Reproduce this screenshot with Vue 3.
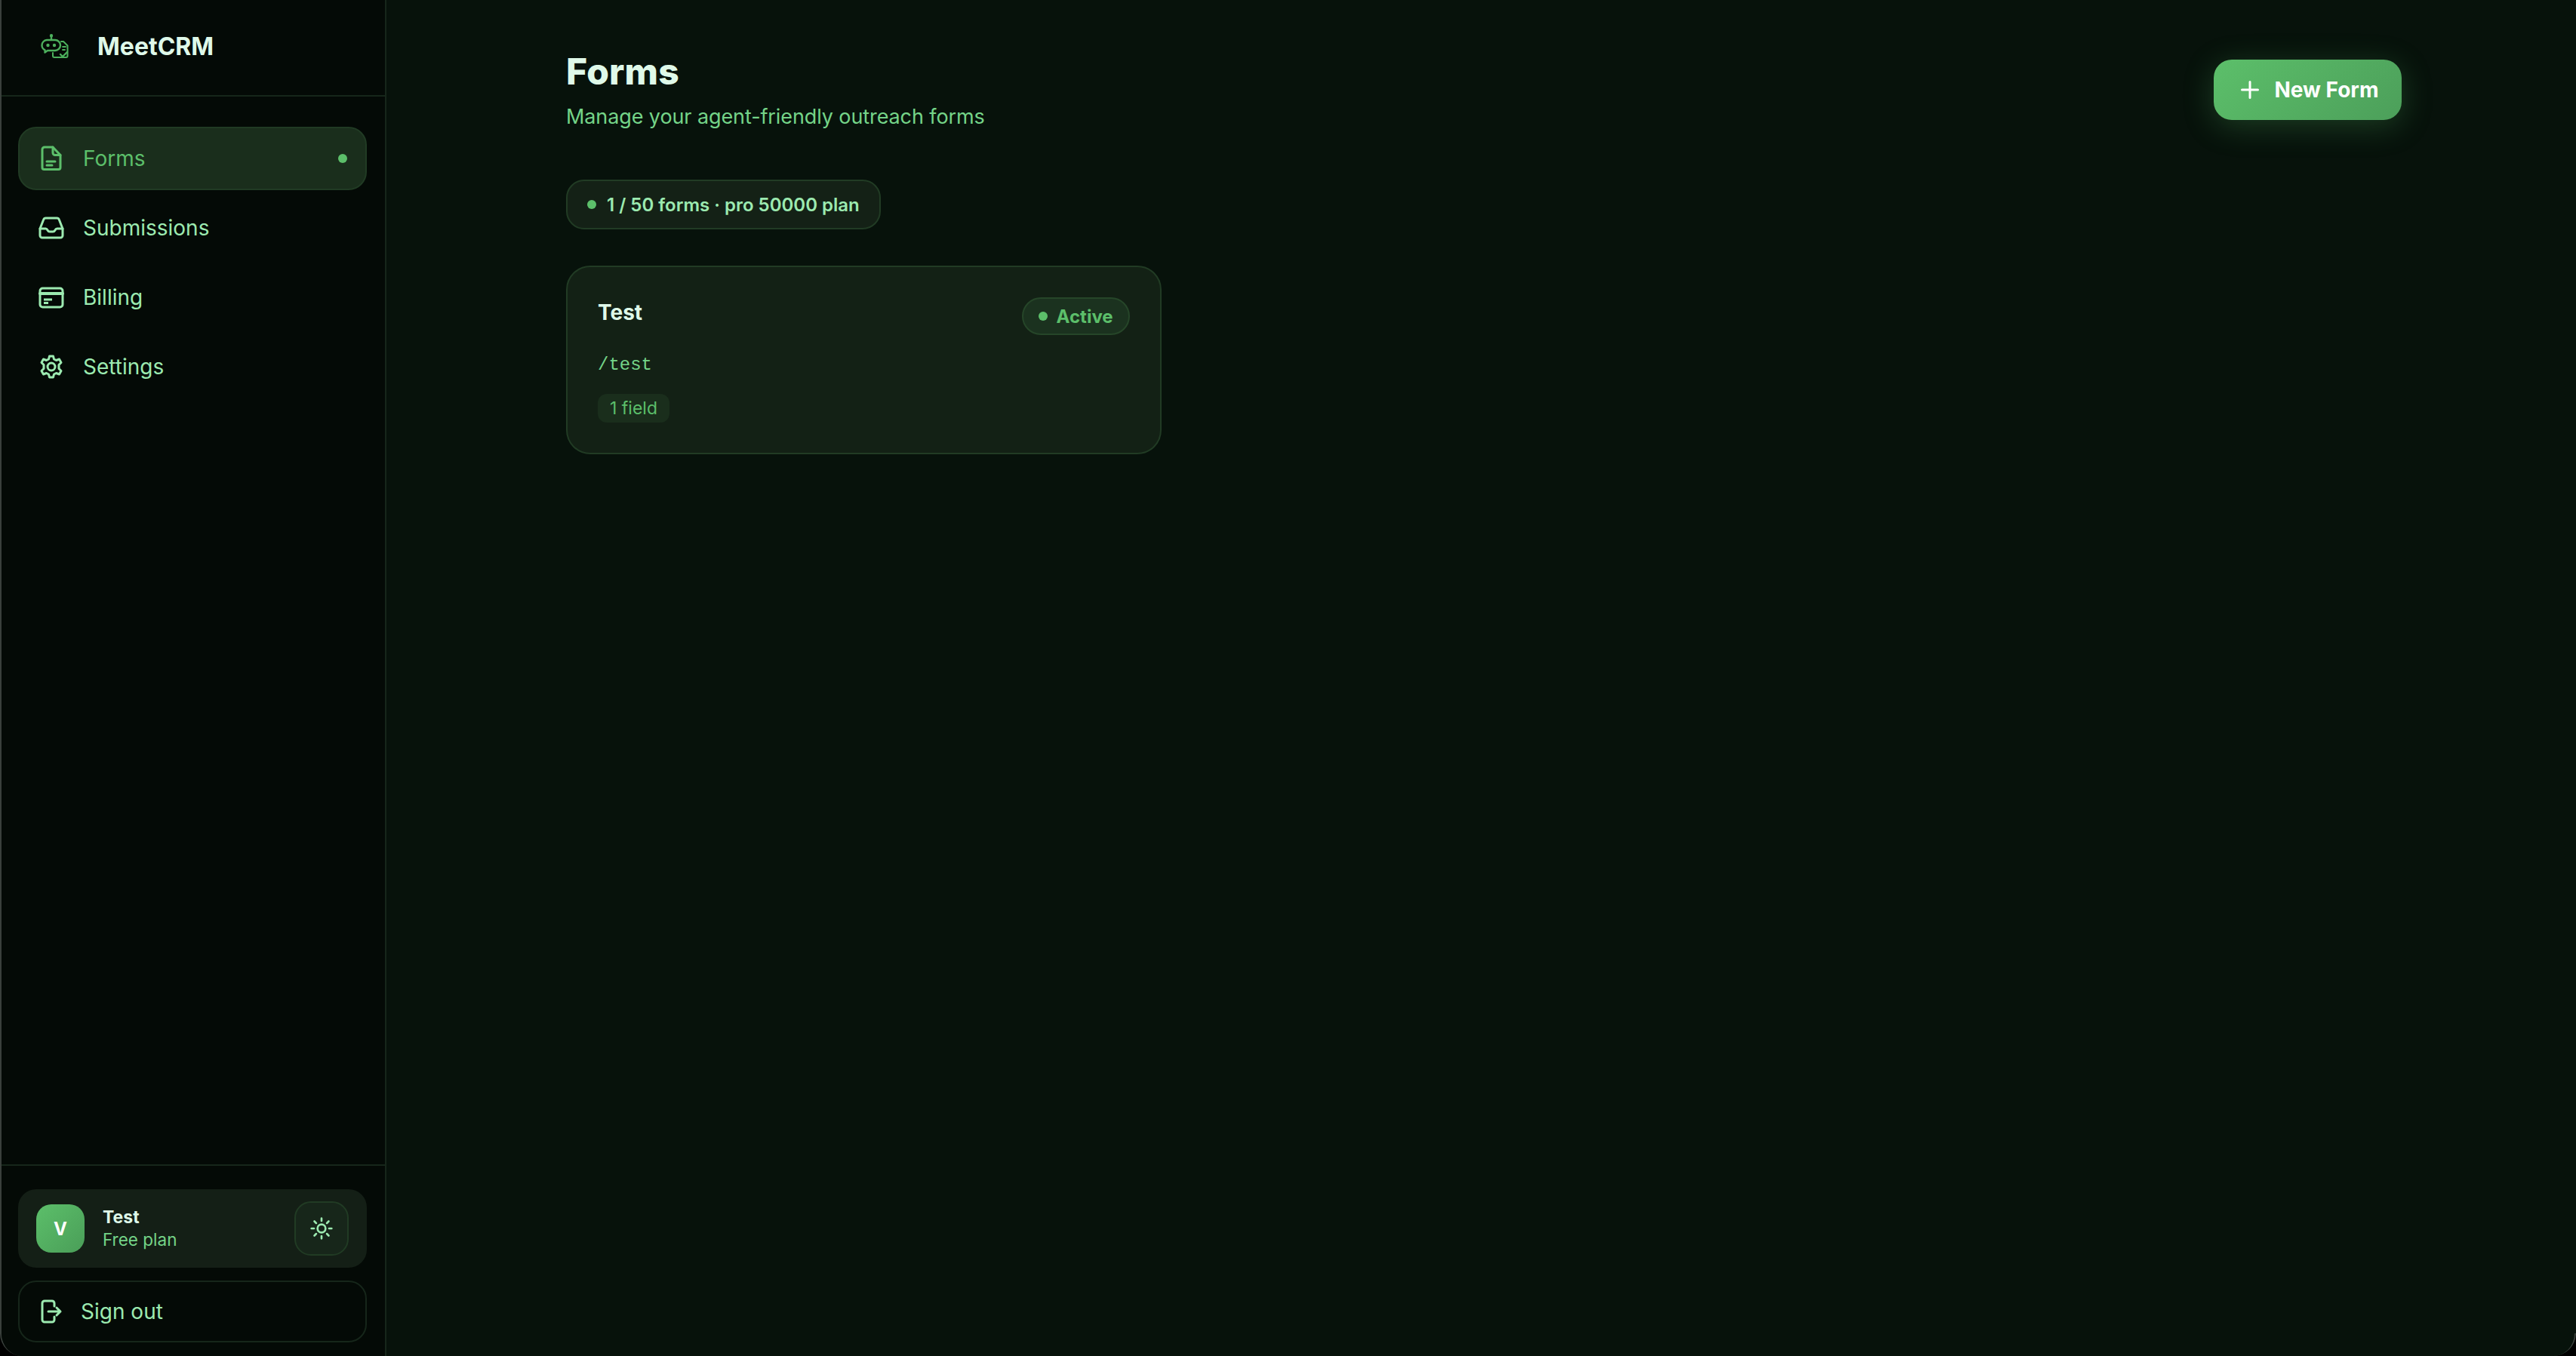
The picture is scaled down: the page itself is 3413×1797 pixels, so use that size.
<script setup>
const navItems = [
  { label: 'Forms', icon: 'file', active: true },
  { label: 'Submissions', icon: 'inbox' },
  { label: 'Billing', icon: 'card' },
  { label: 'Settings', icon: 'gear' },
]
</script>

<template>
  <div class="shell">
    <aside class="sidebar">
      <header class="brand">
        <svg class="logo" viewBox="0 0 38 32" fill="none" stroke="currentColor" stroke-width="2.4" stroke-linecap="round" stroke-linejoin="round">
          <path d="M14 3v5" />
          <circle cx="14" cy="2.200" r="1" fill="currentColor" />
          <path d="M27 10h3l5.500 5.500V29a2 2 0 0 1-2 2H18a2 2 0 0 1-2-2v-4" stroke-width="2" />
          <path d="M29 17h4M29 21h3" stroke-width="1.800" />
          <path d="m26 27 3 3 6-6" />
          <path d="M8 8h11a7 7 0 0 1 7 7v0a7 7 0 0 1-7 7H9l-3.500 2.500V21.300A7 7 0 0 1 1.500 15v0A7 7 0 0 1 8 8Z" fill="#040a06" />
          <circle cx="9.500" cy="15" r="1" fill="currentColor" />
          <circle cx="18" cy="15" r="1" fill="currentColor" />
        </svg>
        <span class="brand-name">MeetCRM</span>
      </header>

      <nav class="nav">
        <a v-for="item in navItems" :key="item.label" class="nav-item" :class="{ active: item.active }">
          <svg class="nav-icon" viewBox="0 0 36 36" fill="none" stroke="currentColor" stroke-width="3" stroke-linecap="round" stroke-linejoin="round">
            <template v-if="item.icon === 'file'">
              <path d="M9 3h11l10 10.500V30a2.500 2.500 0 0 1-2.500 2.500H8.500A2.500 2.500 0 0 1 6 30V6a3 3 0 0 1 3-3Z" />
              <path d="M20 3v7.500a3 3 0 0 0 3 3h7" />
              <path d="M12 22h11M12 27h7" />
            </template>
            <template v-else-if="item.icon === 'inbox'">
              <path d="M10.500 5h15a3 3 0 0 1 2.800 2l4.700 12v9a3 3 0 0 1-3 3H6a3 3 0 0 1-3-3v-9L7.700 7a3 3 0 0 1 2.800-2Z" />
              <path d="M3 19h7.500c1.500 0 2 1 2.500 2 .6 1.200 1.500 2 3 2h4c1.500 0 2.400-.8 3-2 .5-1 1-2 2.500-2H33" />
            </template>
            <template v-else-if="item.icon === 'card'">
              <rect x="3" y="6" width="30" height="25" rx="3.500" />
              <path d="M3 13h30" stroke-width="4" />
              <path d="M8 21h11M8 25.500h6" stroke-linecap="butt" />
            </template>
            <template v-else>
              <path d="M15.500 4h5l1 4 3 1.500 4-1.500 2.500 4.500-3 3v5l3 3-2.500 4.500-4-1.500-3 1.500-1 4h-5l-1-4-3-1.500-4 1.500L5 23.500l3-3v-5l-3-3L7.500 8l4 1.500 3-1.500Z" />
              <circle cx="18" cy="18" r="5" />
            </template>
          </svg>
          <span class="nav-label">{{ item.label }}</span>
          <span v-if="item.active" class="nav-dot"></span>
        </a>
      </nav>

      <footer class="side-foot">
        <div class="user-card">
          <div class="avatar">V</div>
          <div class="user-text">
            <div class="user-name">Test</div>
            <div class="user-plan">Free plan</div>
          </div>
          <button class="theme-btn">
            <svg viewBox="0 0 24 24" fill="none" stroke="currentColor" stroke-width="2" stroke-linecap="round">
              <circle cx="12" cy="12" r="4" />
              <path d="M12 2v2.500M12 19.500V22M2 12h2.500M19.500 12H22M4.900 4.900l1.800 1.800M17.300 17.300l1.800 1.800M4.900 19.100l1.800-1.800M17.300 6.700l1.800-1.800" />
            </svg>
          </button>
        </div>
        <button class="signout">
          <svg class="nav-icon" viewBox="0 0 36 36" fill="none" stroke="currentColor" stroke-width="3" stroke-linecap="round" stroke-linejoin="round">
            <path d="M22 11V7a3 3 0 0 0-3-3H9a3 3 0 0 0-3 3v22a3 3 0 0 0 3 3h10a3 3 0 0 0 3-3v-4" />
            <path d="M14 18h16M25 13l5 5-5 5" />
          </svg>
          <span>Sign out</span>
        </button>
      </footer>
    </aside>

    <main class="main">
      <div class="page-head">
        <div>
          <h1 class="title">Forms</h1>
          <p class="subtitle">Manage your agent-friendly outreach forms</p>
        </div>
        <button class="new-btn">
          <svg viewBox="0 0 36 36" fill="none" stroke="currentColor" stroke-width="3" stroke-linecap="round">
            <path d="M18 7.500v21M7.500 18h21" />
          </svg>
          <span>New Form</span>
        </button>
      </div>

      <div class="usage"><span class="dot"></span>1 / 50 forms · pro 50000 plan</div>

      <div class="grid">
        <article class="card">
          <div class="card-top">
            <h2 class="card-title">Test</h2>
            <span class="status"><span class="status-dot"></span>Active</span>
          </div>
          <div class="slug">/test</div>
          <span class="fields">1 field</span>
        </article>
      </div>
    </main>
  </div>
</template>

<style>
html, body { margin: 0; background: #000; }
</style>

<style scoped>
.shell {
  position: relative;
  width: 3413px;
  height: 1797px;
  box-sizing: border-box;
  display: flex;
  overflow: hidden;
  background: #07120b;
  border-left: 2px solid #3a403c;
  border-radius: 0 0 30px 30px;
  font-family: Inter, "Liberation Sans", sans-serif;
  color: #dff9e9;
}
.shell::after {
  content: "";
  position: absolute;
  right: 0;
  bottom: 0;
  width: 30px;
  height: 30px;
  box-sizing: border-box;
  border-right: 2px solid #3a403c;
  border-bottom-right-radius: 30px;
}
.sidebar {
  width: 510px;
  flex: none;
  box-sizing: border-box;
  display: flex;
  flex-direction: column;
  background: #040a06;
  border-right: 2px solid #16261a;
}
.brand {
  height: 128px;
  box-sizing: border-box;
  display: flex;
  align-items: center;
  gap: 37px;
  padding: 0 0 4px 52px;
  border-bottom: 2px solid #16261a;
}
.logo { width: 38px; height: 32px; color: #4caf5c; }
.brand-name { font-size: 32px; font-weight: 700; }
.nav {
  flex: 1;
  display: flex;
  flex-direction: column;
  gap: 8px;
  padding: 40px 24px 40px 22px;
}
.nav-item {
  height: 84px;
  box-sizing: border-box;
  display: flex;
  align-items: center;
  gap: 24px;
  padding: 0 24px;
  border: 2px solid transparent;
  border-radius: 24px;
  font-size: 28px;
  color: #9ceab0;
}
.nav-item.active {
  background: #1a2e1c;
  border-color: #213b24;
  color: #5cbf6a;
}
.nav-icon { width: 36px; height: 36px; flex: none; }
.nav-label { flex: 1; }
.nav-dot { width: 12px; height: 12px; border-radius: 50%; background: #5cbf6a; }
.side-foot {
  display: flex;
  flex-direction: column;
  gap: 17px;
  padding: 31px 24px 18px 22px;
  border-top: 2px solid #16261a;
}
.user-card {
  height: 104px;
  box-sizing: border-box;
  display: flex;
  align-items: center;
  padding: 0 24px;
  gap: 24px;
  background: #141f16;
  border-radius: 24px;
}
.avatar {
  width: 64px;
  height: 64px;
  flex: none;
  display: flex;
  align-items: center;
  justify-content: center;
  border-radius: 20px;
  background: linear-gradient(135deg, #5cbf6a, #4a9e58);
  color: #fff;
  font-size: 24px;
  font-weight: 700;
}
.user-text { flex: 1; }
.user-name { font-size: 23px; font-weight: 700; line-height: 30px; }
.user-plan { font-size: 22.5px; line-height: 30px; color: #74d488; }
.theme-btn {
  width: 72px;
  height: 72px;
  display: flex;
  align-items: center;
  justify-content: center;
  padding: 0;
  background: #17261a;
  border: 2px solid #213b24;
  border-radius: 22px;
  color: #9ceab0;
}
.theme-btn svg { width: 32px; height: 32px; }
.signout {
  height: 82px;
  display: flex;
  align-items: center;
  gap: 21px;
  padding: 0 24px;
  background: transparent;
  border: 2px solid #16261a;
  border-radius: 24px;
  font: inherit;
  font-size: 28px;
  color: #9ceab0;
}
.main {
  flex: 1;
  box-sizing: border-box;
  padding: 79px 231px 0 238px;
}
.page-head { display: flex; justify-content: space-between; align-items: flex-start; }
.title {
  margin: -14px 0 0;
  font-size: 48px;
  font-weight: 800;
  line-height: 60px;
  letter-spacing: 0.2px;
}
.subtitle { margin: 12px 0 0; font-size: 27px; line-height: 36px; letter-spacing: -0.1px; color: #74d488; }
.new-btn {
  width: 249px;
  height: 80px;
  display: flex;
  align-items: center;
  justify-content: center;
  gap: 14px;
  border: none;
  border-radius: 24px;
  background: linear-gradient(135deg, #5cbf6a, #4c9f5a);
  box-shadow: 0 8px 40px rgba(92, 191, 106, 0.25);
  color: #fff;
  font: inherit;
  font-size: 28px;
  font-weight: 700;
}
.new-btn svg { width: 36px; height: 36px; }
.usage {
  display: inline-flex;
  align-items: center;
  gap: 14px;
  height: 66px;
  box-sizing: border-box;
  margin-top: 65px;
  padding: 0 26px;
  background: #142116;
  border: 2px solid #213b24;
  border-radius: 24px;
  font-size: 24px;
  font-weight: 600;
  color: #9ceab0;
}
.dot { width: 12px; height: 12px; border-radius: 50%; background: #5cbf6a; }
.grid {
  display: grid;
  grid-template-columns: repeat(3, 1fr);
  gap: 33px;
  margin-top: 48px;
}
.card {
  height: 250px;
  box-sizing: border-box;
  padding: 42px 40px;
  background: #132115;
  border: 2px solid #213b24;
  border-radius: 32px;
}
.card-top { display: flex; justify-content: space-between; align-items: flex-start; }
.card-title { margin: 0; font-size: 28px; font-weight: 700; line-height: 36px; }
.status {
  display: inline-flex;
  align-items: center;
  gap: 12px;
  height: 50px;
  box-sizing: border-box;
  margin-top: -2px;
  padding: 0 20px;
  background: #1b321f;
  border: 2px solid #264629;
  border-radius: 25px;
  font-size: 24px;
  font-weight: 700;
  color: #5cbf6a;
}
.status-dot { width: 12px; height: 12px; border-radius: 50%; background: #5cbf6a; }
.slug { margin-top: 25px; font-family: "Liberation Mono", monospace; font-size: 24px; line-height: 30px; color: #74d488; }
.fields {
  display: inline-block;
  margin-top: 23px;
  padding: 0 16px;
  line-height: 38px;
  background: #1a2e1c;
  border-radius: 12px;
  font-size: 23px;
  color: #5cbf6a;
}
</style>
